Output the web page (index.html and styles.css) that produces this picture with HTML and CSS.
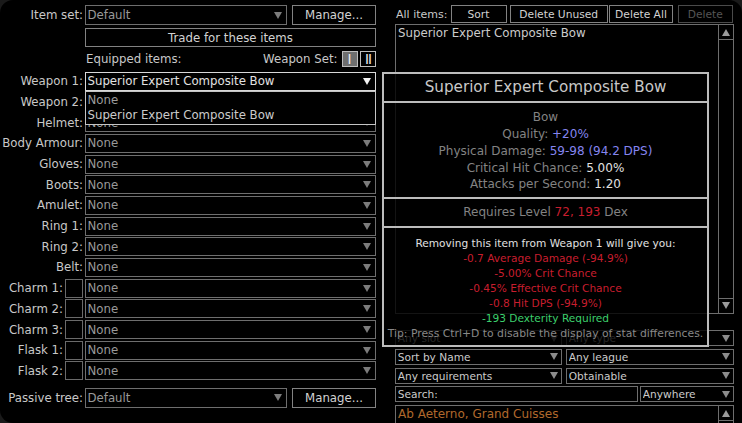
FILE: index.html
```
<!DOCTYPE html>
<html>
<head>
<meta charset="utf-8">
<link rel="stylesheet" href="styles.css">
</head>
<body>
<div class="app">
  <div class="left">
    <div class="row top-row">
      <span class="lbl">Item set:</span>
      <div class="pair">
        <div class="dd short"><span class="val">Default</span><span class="arr"></span></div>
        <div class="btn manage">Manage...</div>
      </div>
    </div>
    <div class="row trade-row"><span></span><div class="btn">Trade for these items</div></div>
    <div class="row eq-row"><span></span>
      <div class="eq"><span>Equipped items:</span><span class="ws">Weapon Set:<span class="wsb on">I</span><span class="wsb">II</span></span></div>
    </div>
    <div class="slots">
      <div class="row slot"><span class="lbl">Weapon 1:</span>
        <div class="dd open"><span class="val">Superior Expert Composite Bow</span><span class="arr"></span>
          <div class="ddlist"><div class="opt dimopt">None</div><div class="opt">Superior Expert Composite Bow</div></div>
        </div>
      </div>
      <div class="row slot"><span class="lbl">Weapon 2:</span><div class="dd"><span class="val">None</span><span class="arr"></span></div></div>
      <div class="row slot"><span class="lbl">Helmet:</span><div class="dd"><span class="val">None</span><span class="arr"></span></div></div>
      <div class="row slot"><span class="lbl">Body Armour:</span><div class="dd"><span class="val">None</span><span class="arr"></span></div></div>
      <div class="row slot"><span class="lbl">Gloves:</span><div class="dd"><span class="val">None</span><span class="arr"></span></div></div>
      <div class="row slot"><span class="lbl">Boots:</span><div class="dd"><span class="val">None</span><span class="arr"></span></div></div>
      <div class="row slot"><span class="lbl">Amulet:</span><div class="dd"><span class="val">None</span><span class="arr"></span></div></div>
      <div class="row slot"><span class="lbl">Ring 1:</span><div class="dd"><span class="val">None</span><span class="arr"></span></div></div>
      <div class="row slot"><span class="lbl">Ring 2:</span><div class="dd"><span class="val">None</span><span class="arr"></span></div></div>
      <div class="row slot"><span class="lbl">Belt:</span><div class="dd"><span class="val">None</span><span class="arr"></span></div></div>
      <div class="row slot"><span class="lbl">Charm 1:<span class="box"></span></span><div class="dd"><span class="val">None</span><span class="arr"></span></div></div>
      <div class="row slot"><span class="lbl">Charm 2:<span class="box"></span></span><div class="dd"><span class="val">None</span><span class="arr"></span></div></div>
      <div class="row slot"><span class="lbl">Charm 3:<span class="box"></span></span><div class="dd"><span class="val">None</span><span class="arr"></span></div></div>
      <div class="row slot"><span class="lbl">Flask 1:<span class="box"></span></span><div class="dd"><span class="val">None</span><span class="arr"></span></div></div>
      <div class="row slot"><span class="lbl">Flask 2:<span class="box"></span></span><div class="dd"><span class="val">None</span><span class="arr"></span></div></div>
    </div>
    <div class="row pass-row">
      <span class="lbl">Passive tree:</span>
      <div class="pair">
        <div class="dd short"><span class="val">Default</span><span class="arr"></span></div>
        <div class="btn manage">Manage...</div>
      </div>
    </div>
  </div>

  <div class="right">
    <div class="head">
      <span class="ai">All items:</span>
      <div class="btn b-sort">Sort</div>
      <div class="btn b-du">Delete Unused</div>
      <div class="btn b-da">Delete All</div>
      <div class="btn b-d">Delete</div>
    </div>
    <div class="list main-list">
      <div class="lcontent"><div class="litem">Superior Expert Composite Bow</div></div>
      <div class="sbar"><span class="sbtn up"><i class="tri-up"></i></span><span class="sbtn down"><i class="tri-down"></i></span></div>
    </div>
    <div class="frow first">
      <div class="dd r w1"><span class="val">Any slot</span><span class="arr"></span></div>
      <div class="dd r w2"><span class="val">Any type</span><span class="arr"></span></div>
    </div>
    <div class="frow">
      <div class="dd r w1"><span class="val">Sort by Name</span><span class="arr"></span></div>
      <div class="dd r w2"><span class="val">Any league</span><span class="arr"></span></div>
    </div>
    <div class="frow">
      <div class="dd r w1"><span class="val">Any requirements</span><span class="arr"></span></div>
      <div class="dd r w2"><span class="val">Obtainable</span><span class="arr"></span></div>
    </div>
    <div class="frow">
      <div class="dd r search"><span class="val">Search:</span></div>
      <div class="dd r w3"><span class="val">Anywhere</span><span class="arr"></span></div>
    </div>
    <div class="list db-list">
      <div class="lcontent"><div class="litem unique">Ab Aeterno, Grand Cuisses</div></div>
      <div class="sbar"><span class="sbtn up"><i class="tri-up"></i></span></div>
    </div>
  </div>

  <div class="tip">
    <div class="tip-title">Superior Expert Composite Bow</div>
    <div class="tip-sec2">
      <div class="g">Bow</div>
      <div><span class="g">Quality: </span><span class="b">+20%</span></div>
      <div><span class="g">Physical Damage: </span><span class="b">59-98 (94.2 DPS)</span></div>
      <div><span class="g">Critical Hit Chance: </span><span class="w">5.00%</span></div>
      <div><span class="g">Attacks per Second: </span><span class="w">1.20</span></div>
    </div>
    <div class="tip-sec3"><span class="g">Requires Level </span><span class="r">72,</span><span class="r"> 193</span><span class="g"> Dex</span></div>
    <div class="tip-sec4">
      <div class="w">Removing this item from Weapon 1 will give you:</div>
      <div class="r">-0.7 Average Damage (-94.9%)</div>
      <div class="r">-5.00% Crit Chance</div>
      <div class="r">-0.45% Effective Crit Chance</div>
      <div class="r">-0.8 Hit DPS (-94.9%)</div>
      <div class="gr">-193 Dexterity Required</div>
      <div class="tipline">Tip: Press Ctrl+D to disable the display of stat differences.</div>
    </div>
  </div>
</div>
</body>
</html>
```

FILE: styles.css
```
* { box-sizing: border-box; }
body {
  margin: 0;
  background: #1a1a1a;
  font-family: "DejaVu Sans", "Bitstream Vera Sans", sans-serif;
}
.app {
  position: relative;
  width: 742px;
  height: 423px;
  background: #000;
  border-radius: 13px 13px 0 13px;
  overflow: hidden;
  display: flex;
  color: #c8c8c8;
  font-size: 11.75px;
}

/* ---------- left ---------- */
.left {
  flex: none;
  width: 376px;
  padding-top: 5px;
  display: flex;
  flex-direction: column;
}
.row {
  display: grid;
  grid-template-columns: 83px 291px;
  column-gap: 2px;
}
.lbl {
  display: flex;
  justify-content: flex-end;
  align-items: center;
  white-space: nowrap;
  color: #c8c8c8;
}
.box {
  width: 18px;
  align-self: stretch;
  margin-left: 2px;
  border: 1px solid #6a6a6a;
}
.top-row, .pass-row { height: 20px; }
.pass-row { margin-top: 7.5px; }
.pair { display: flex; justify-content: space-between; }
.short { width: 202px; }
.manage { width: 84px; }
.trade-row { height: 19px; margin-top: 3px; }
.eq-row { height: 16.5px; margin-top: 4px; }
.eq {
  display: flex;
  justify-content: space-between;
  align-items: center;
  padding-left: 1px;
}
.ws { display: flex; align-items: center; height: 100%; }
.wsb {
  width: 16px;
  height: 16px;
  border: 1px solid #bdbdbd;
  display: flex;
  align-items: center;
  justify-content: center;
  color: #f0f0f0;
  margin-left: 2.5px;
  font-size: 13.5px;
  letter-spacing: -1px;
}
.wsb.on { background: #6e6e6e; margin-left: 4px; letter-spacing: 0; }
.slots {
  margin-top: 4.3px;
  display: flex;
  flex-direction: column;
  gap: 1.7px;
}
.slot { height: 19px; }

.dd {
  position: relative;
  border: 1px solid #6e6e6e;
  background: #000;
  display: flex;
  align-items: center;
  padding-left: 1.5px;
  color: #999;
  white-space: nowrap;
}
.val { flex: 1; overflow: hidden; }
.arr {
  flex: none;
  width: 0;
  height: 0;
  margin-right: 4px;
  border-left: 4px solid transparent;
  border-right: 4px solid transparent;
  border-top: 7px solid #7c7c7c;
}
.dd.open { border-color: #d8d8d8; color: #e2e2e2; }
.dd.open .arr { border-top-color: #f2f2f2; }
.ddlist {
  position: absolute;
  z-index: 3;
  left: -1px;
  right: -1px;
  top: calc(100% + 1px);
  height: 34px;
  background: #000;
  border: 1px solid #c4c4c4;
  padding: 1px 0 0 1.5px;
  line-height: 15.3px;
}
.opt { color: #cbcbcb; }
.opt.dimopt { color: #9c9c9c; }

.btn {
  border: 1px solid #828282;
  background: #000;
  display: flex;
  align-items: center;
  justify-content: center;
  color: #d2d2d2;
  white-space: nowrap;
}

/* ---------- right ---------- */
.right {
  flex: none;
  margin-left: 19px;
  width: 338.5px;
  padding-top: 5px;
  display: flex;
  flex-direction: column;
}
.head { display: flex; height: 18px; font-size: 10.7px; }
.ai { width: 55.5px; font-size: 11px; display: flex; align-items: center; padding-left: 1px; }
.b-sort { width: 56px; }
.b-du { width: 97.5px; margin-left: 3.5px; }
.b-da { width: 64px; margin-left: 1.5px; }
.b-d { width: 55.5px; margin-left: 4.5px; color: #555; border-color: #4a4a4a; }

.list {
  border: 1px solid #6e6e6e;
  display: flex;
}
.main-list { margin-top: 1px; height: 289.5px; }
.lcontent {
  flex: 1;
  padding: 0 2px;
  font-size: 11.8px;
  line-height: 16px;
  color: #cbcbcb;
}
.litem { white-space: nowrap; }
.unique { color: #b0682c; font-size: 12px; }
.sbar {
  width: 15px;
  border-left: 1px solid #6e6e6e;
  display: flex;
  flex-direction: column;
  justify-content: space-between;
}
.sbtn {
  height: 15px;
  display: flex;
  align-items: center;
  justify-content: center;
}
.sbtn.up { border-bottom: 1px solid #6e6e6e; }
.sbtn.down { border-top: 1px solid #6e6e6e; }
.tri-up {
  width: 0; height: 0;
  border-left: 4px solid transparent;
  border-right: 4px solid transparent;
  border-bottom: 7px solid #9a9a9a;
}
.tri-down {
  width: 0; height: 0;
  border-left: 4px solid transparent;
  border-right: 4px solid transparent;
  border-top: 7px solid #9a9a9a;
}

.frow {
  display: flex;
  justify-content: space-between;
  height: 16px;
  margin-top: 2.8px;
  font-size: 10.6px;
}
.frow.first { margin-top: 16.5px; }
.dd.r { color: #cbcbcb; padding-left: 1.8px; }
.dd.r .arr { margin-right: 3px; border-top-color: #8c8c8c; }
.w1 { width: 167px; }
.w2 { width: 167.6px; }
.search { width: 242.6px; }
.w3 { width: 93.5px; }
.db-list { margin-top: 2.8px; flex: 1; border-bottom: none; }

/* ---------- tooltip ---------- */
.tip {
  position: absolute;
  z-index: 5;
  left: 382px;
  top: 72px;
  width: 327px;
  height: 275px;
  border: 2px solid #bcbcbc;
  background: rgba(0, 0, 0, 0.82);
  text-align: center;
  white-space: nowrap;
}
.tip-title {
  height: 29px;
  line-height: 27px;
  font-size: 15.2px;
  color: #c8c8c8;
  border-bottom: 2px solid #bcbcbc;
}
.tip-sec2 {
  font-size: 12px;
  line-height: 16.9px;
  padding: 5.8px 0 4.1px;
  border-bottom: 2px solid #bcbcbc;
}
.tip-sec3 {
  font-size: 12px;
  line-height: 16.9px;
  padding: 4.7px 0 5.4px;
  border-bottom: 2px solid #bcbcbc;
}
.tip-sec4 {
  font-size: 10.6px;
  line-height: 15px;
  padding-top: 7.8px;
}
.g { color: #838383; }
.b { color: #8585f0; }
.w { color: #e0e0e0; }
.r { color: #c81e2e; }
.gr { color: #3ccf6c; }
.tipline { color: #888; font-size: 10.8px; }
```
